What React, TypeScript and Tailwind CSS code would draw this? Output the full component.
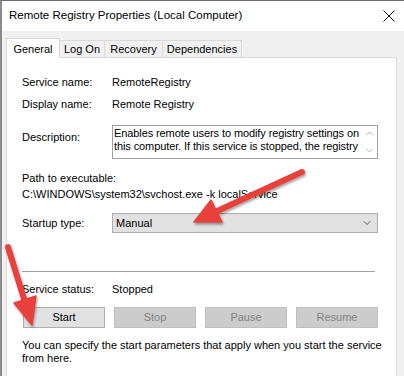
import { ChevronDown, ChevronUp } from 'lucide-react';

const font = { fontFamily: '"Liberation Sans", Arial, sans-serif' };

function Arrows() {
  return (
    <svg className="pointer-events-none absolute inset-0" width="404" height="376" viewBox="0 0 404 376">
      <defs>
        <filter id="sh" x="-20%" y="-20%" width="140%" height="140%">
          <feDropShadow dx="1" dy="2" stdDeviation="1.2" floodColor="#000" floodOpacity="0.35" />
        </filter>
      </defs>
      <g filter="url(#sh)" fill="#e8413b" stroke="#e8413b">
        <line x1="300" y1="171" x2="213" y2="211" strokeWidth="6" strokeLinecap="round" />
        <polygon points="192,221 220,221 209,199" strokeWidth="1.5" strokeLinejoin="round" />
        <line x1="6" y1="246" x2="23" y2="301" strokeWidth="6" strokeLinecap="round" />
        <polygon points="30,324 12,302 34,295" strokeWidth="1.5" strokeLinejoin="round" />
      </g>
    </svg>
  );
}

export default function App() {
  return (
    <div
      style={font}
      className="relative h-[376px] w-[404px] overflow-hidden border-l-2 border-t border-l-[#8a8a8a] border-t-[#6b6b6b] bg-[#f0f0f0] text-[11px] text-black"
    >
      <div className="flex h-[30px] items-center justify-between bg-white pl-[7px] pr-[8px]">
        <span className="text-[11.5px]">Remote Registry Properties (Local Computer)</span>
        <svg width="12" height="12" viewBox="0 0 12 12" className="mr-[1px]">
          <path d="M0.5 0.5 L11.5 11.5 M11.5 0.5 L0.5 11.5" stroke="#111" strokeWidth="1" />
        </svg>
      </div>

      <div className="flex items-end pl-[4px] pt-[7px]">
        <div className="relative z-10 -mb-px flex h-[20px] w-[54px] items-start justify-center border border-b-0 border-[#d9d9d9] bg-white pt-[2px]">
          General
        </div>
        <div className="flex h-[17px] w-[45px] items-center justify-center border border-l-0 border-b-0 border-[#d9d9d9]">Log On</div>
        <div className="flex h-[17px] w-[58px] items-center justify-center border border-l-0 border-b-0 border-[#d9d9d9]">Recovery</div>
        <div className="flex h-[17px] w-[79px] items-center justify-center border border-l-0 border-b-0 border-[#d9d9d9]">Dependencies</div>
      </div>

      <div className="ml-[4px] h-[330px] w-[391px] border border-[#d9d9d9] bg-white pl-[15px] pr-[17px] leading-[15px]">
        <div className="mt-[17px] flex">
          <span className="w-[90px]">Service name:</span>
          <span>RemoteRegistry</span>
        </div>
        <div className="mt-[7px] flex">
          <span className="w-[90px]">Display name:</span>
          <span>Remote Registry</span>
        </div>
        <div className="mt-[13px] flex">
          <span className="w-[90px] pt-[5px]">Description:</span>
          <div className="flex h-[34px] w-[266px] border border-[#a0a0a0] leading-[13px]">
            <p className="h-[27px] flex-1 overflow-hidden pl-[1px] pt-[1px] tracking-[-0.1px]">
              Enables remote users to modify registry settings on this computer. If this service is stopped, the registry can be modified only by users on this computer.
            </p>
            <div className="flex w-[15px] flex-col items-center justify-between py-[2px] text-[#8a8a8a]">
              <ChevronUp size={11} strokeWidth={1.5} />
              <ChevronDown size={11} strokeWidth={1.5} />
            </div>
          </div>
        </div>
        <div className="mt-[12px]">Path to executable:</div>
        <div className="mt-[1px]">C:\WINDOWS\system32\svchost.exe -k localService</div>
        <div className="mt-[11px] flex items-center">
          <span className="w-[90px]">Startup type:</span>
          <div className="flex h-[20px] w-[266px] items-center justify-between border border-[#adadad] bg-[#e1e1e1] pl-[3px] pr-[4px]">
            <span>Manual</span>
            <ChevronDown size={12} strokeWidth={1.5} className="text-[#333]" />
          </div>
        </div>
        <div className="mt-[38px] h-px w-[353px] bg-[#a0a0a0]" />
        <div className="mt-[10px] flex">
          <span className="w-[90px]">Service status:</span>
          <span>Stopped</span>
        </div>
        <div className="mt-[10px] grid w-[356px] grid-cols-4 gap-[9px] pl-[1px]">
          <div className="flex h-[21px] items-center justify-center border border-[#adadad] bg-[#e1e1e1]">Start</div>
          <div className="flex h-[21px] items-center justify-center border border-[#bfbfbf] bg-[#cccccc] text-[#838383]">Stop</div>
          <div className="flex h-[21px] items-center justify-center border border-[#bfbfbf] bg-[#cccccc] text-[#838383]">Pause</div>
          <div className="flex h-[21px] items-center justify-center border border-[#bfbfbf] bg-[#cccccc] text-[#838383]">Resume</div>
        </div>
        <p className="mt-[11px] w-[360px] leading-[13px]">
          You can specify the start parameters that apply when you start the service from here.
        </p>
      </div>

      <Arrows />
    </div>
  );
}
